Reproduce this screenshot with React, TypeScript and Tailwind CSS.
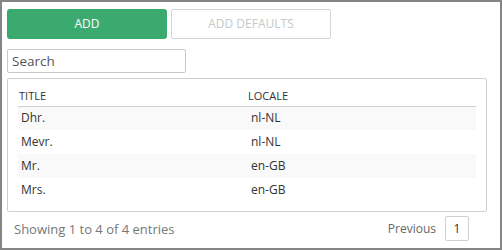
import React from 'react';

const rows = [
  { title: 'Dhr.', locale: 'nl-NL' },
  { title: 'Mevr.', locale: 'nl-NL' },
  { title: 'Mr.', locale: 'en-GB' },
  { title: 'Mrs.', locale: 'en-GB' },
];

export default function App() {
  return (
    <div
      className="w-[502px] h-[250px] border-2 border-[#858585] bg-white pl-[5px] pt-[7px] text-[#333]"
      style={{ fontFamily: '"Open Sans", "Liberation Sans", sans-serif' }}
    >
      <div className="flex gap-[4px]">
        <button className="w-[160px] h-[30px] bg-[#3aaa6f] rounded-[3px] text-white text-[12px]">
          ADD
        </button>
        <button className="w-[160px] h-[30px] border border-[#d4d4d4] rounded-[2px] text-[#c8c8c8] text-[12px]">
          ADD DEFAULTS
        </button>
      </div>

      <input
        placeholder="Search"
        className="mt-[10px] block w-[179px] h-[24px] border border-[#c8c8c8] rounded-[2px] px-[4px] text-[13.5px] placeholder:text-[#555] outline-none"
      />

      <div className="mt-[5px] w-[480px] h-[134px] border border-[#cfcfcf] rounded-[2px] pt-[8px] pl-[10px]">
        <table className="w-[458px] border-collapse text-[12px]">
          <thead>
            <tr className="border-b border-[#cfcfcf]">
              <th className="h-[19px] text-left font-normal text-[11px] pl-[1px] w-[230px] align-middle">TITLE</th>
              <th className="text-left font-normal text-[11px] align-middle">LOCALE</th>
            </tr>
          </thead>
          <tbody>
            {rows.map((row, i) => (
              <tr key={row.title} className={i % 2 === 0 ? 'bg-[#f9f9f9]' : 'bg-white'}>
                <td className="h-[24px] pl-[3px] align-middle">{row.title}</td>
                <td className="pl-[3px] align-middle">{row.locale}</td>
              </tr>
            ))}
          </tbody>
        </table>
      </div>

      <div className="w-[480px] flex items-center justify-between mt-[4px]">
        <span className="pl-[7px] pt-[2px] text-[13px] text-[#777]">Showing 1 to 4 of 4 entries</span>
        <div className="flex items-center gap-[9px] pr-[18px]">
          <span className="text-[12px] text-[#666]">Previous</span>
          <span className="w-[24px] h-[25px] flex items-center justify-center border border-[#cfcfcf] rounded-[2px] text-[12px] text-[#333]">
            1
          </span>
        </div>
      </div>
    </div>
  );
}
